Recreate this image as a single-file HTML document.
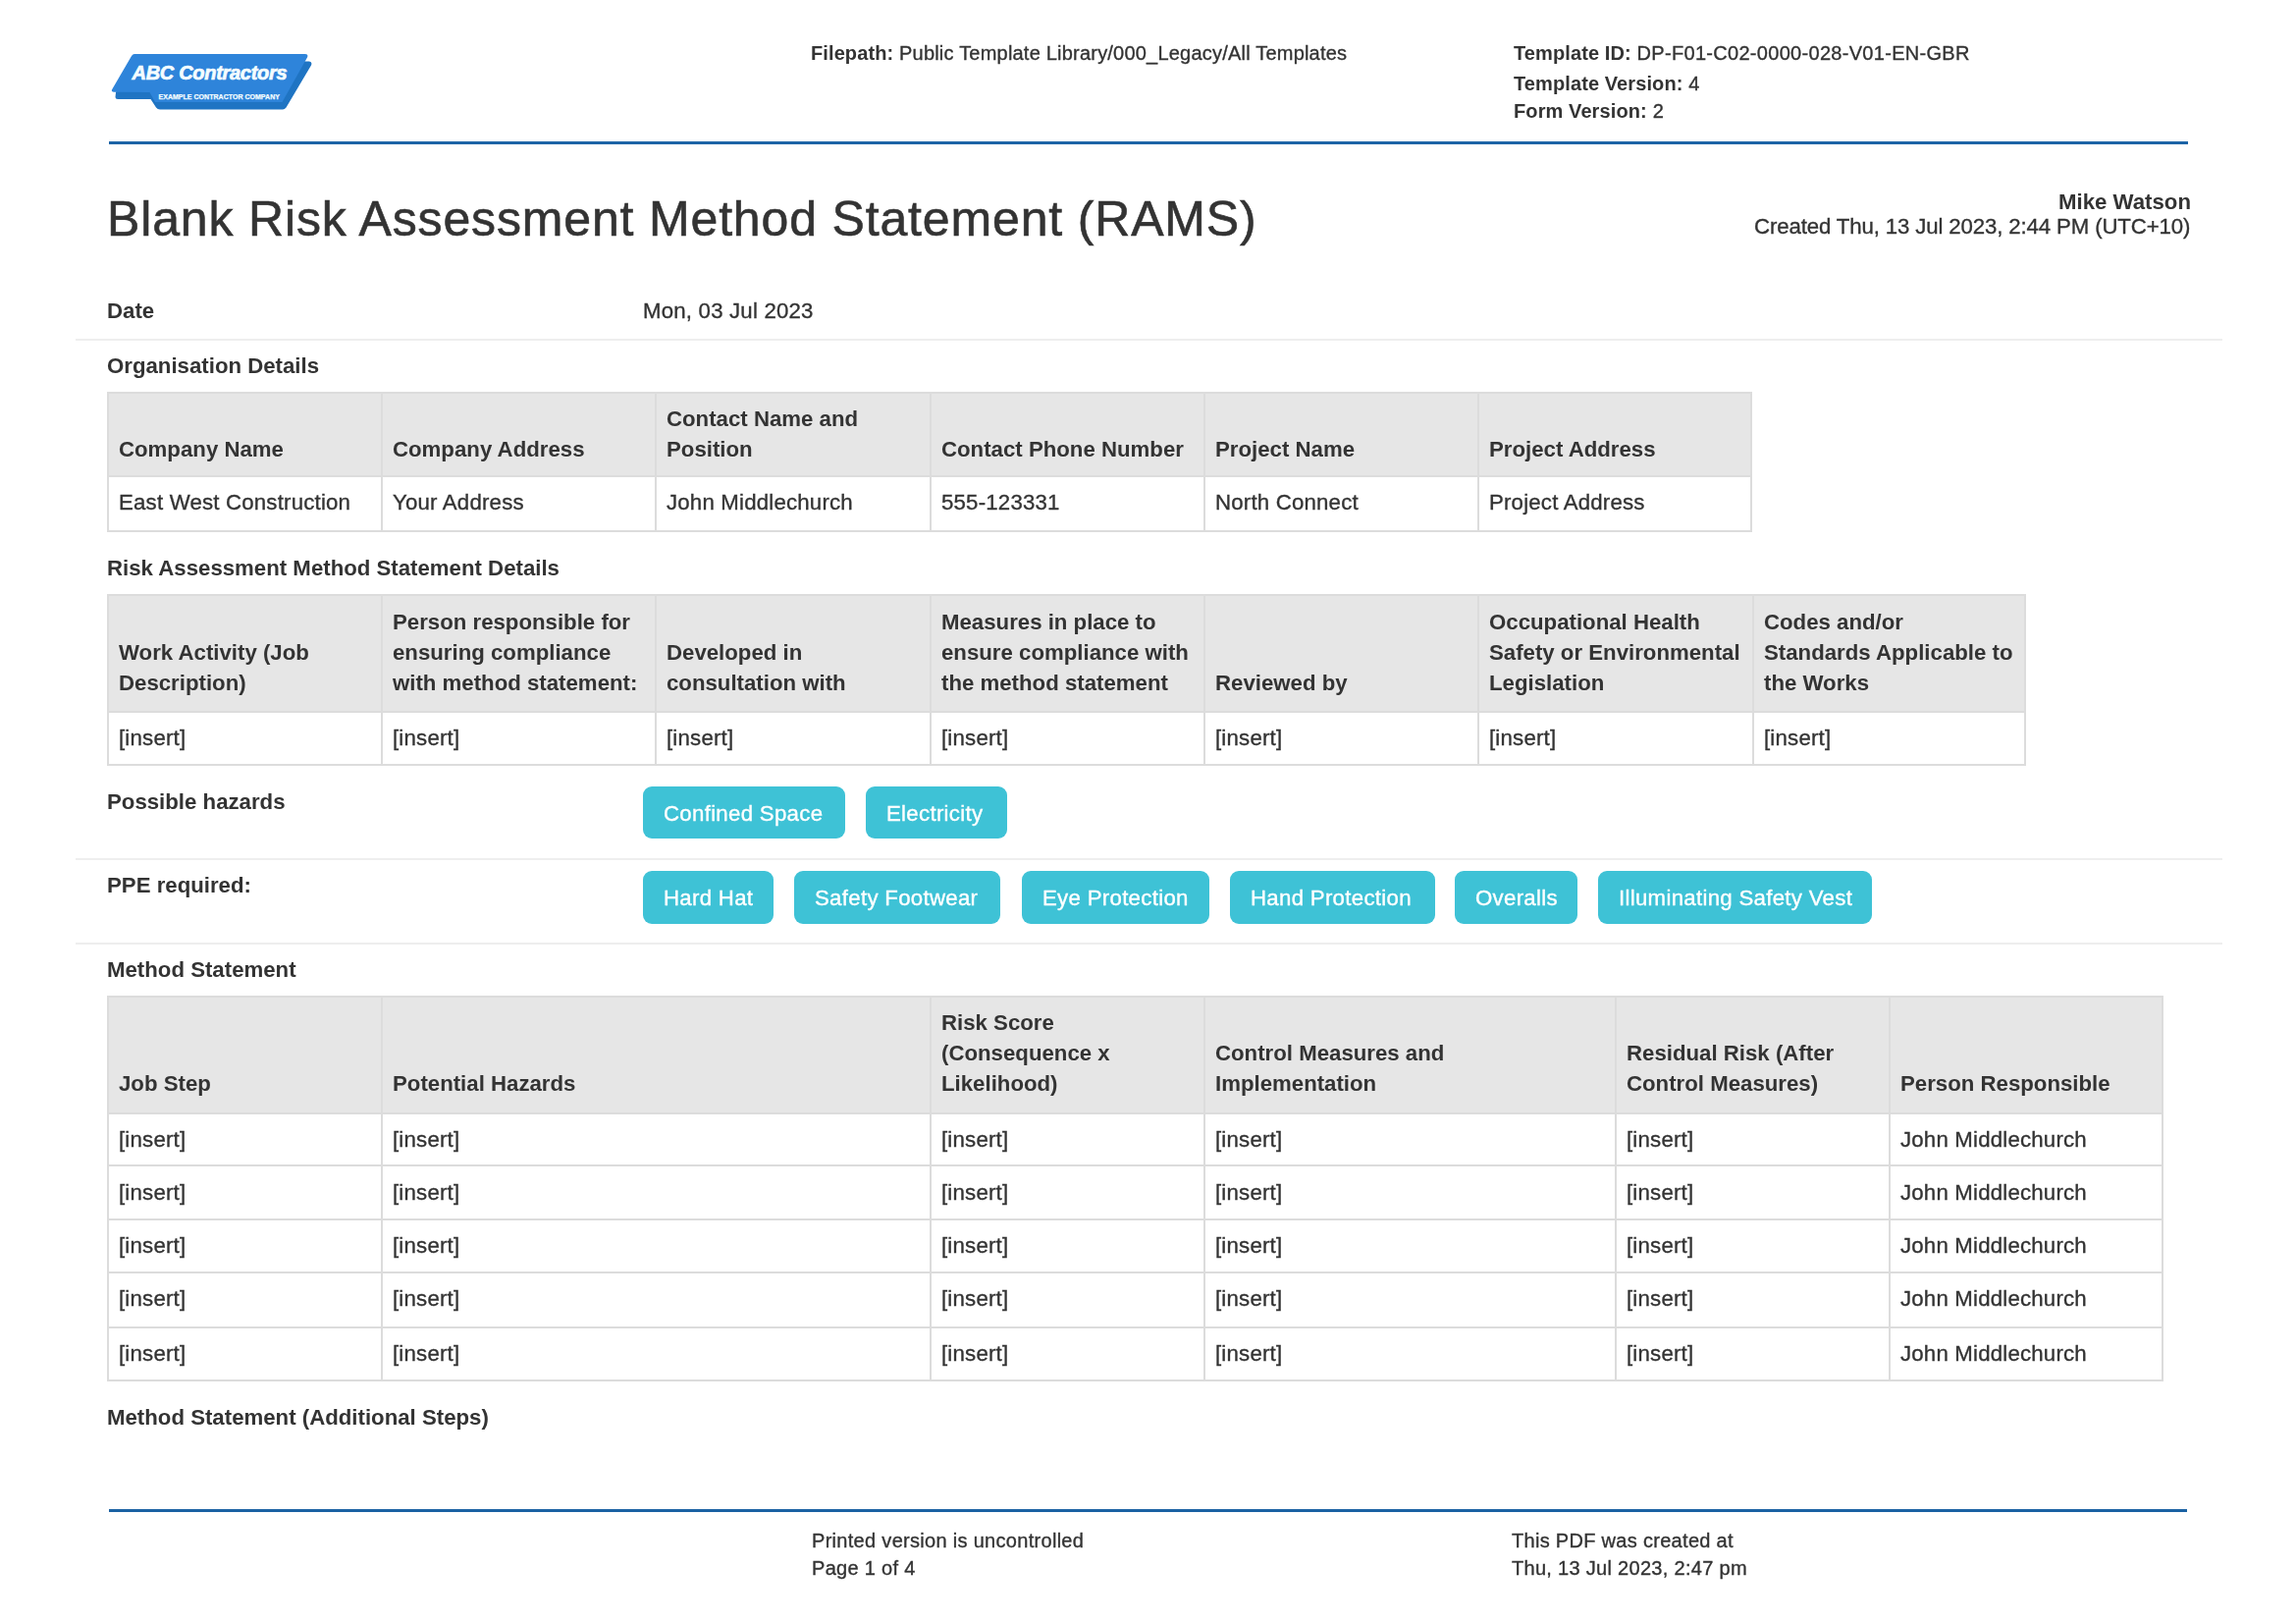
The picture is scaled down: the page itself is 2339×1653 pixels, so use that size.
<!DOCTYPE html>
<html><head><meta charset="utf-8"><title>RAMS</title>
<style>
html,body{margin:0;padding:0;background:#ffffff;}
body{width:2339px;height:1653px;position:relative;overflow:hidden;font-family:'Liberation Sans', sans-serif;color:#333333;}
.t{position:absolute;white-space:nowrap;will-change:transform;font-family:'Liberation Sans', sans-serif;}
.t b{font-weight:bold;-webkit-text-stroke-width:0;}
.t{-webkit-text-stroke:0.35px currentColor;}
.t.bo{-webkit-text-stroke-width:0;}
.r{position:absolute;}
.pill{position:absolute;background:#3ec2d6;border-radius:9px;color:#ffffff;font-family:'Liberation Sans', sans-serif;font-size:22.22px;line-height:22.22px;white-space:nowrap;box-sizing:border-box;padding-left:21px;padding-top:17.4px;letter-spacing:0.3px;-webkit-text-stroke:0.35px #fff;will-change:transform;}
</style></head><body>
<svg class="logo" width="240" height="80" viewBox="100 45 240 80" style="position:absolute;left:100px;top:45px">
<path d="M118,94 L117.5,99 Q117.5,101 120,101 L153.5,101 L159,109.5 Q160.5,111.6 163,111.6 L288,111.6 Q290,111.6 291.5,109.5 L317,66.5 Q318.5,63 315,62.5 L140,62.5 Z" fill="#1f74c3"/>
<path d="M137,55 L311,55 Q314.5,55 313,58.5 L287.5,104 L158,104 L152.5,94 L116,93.8 Q112.5,93.6 114.5,90.5 L134,57 Q135.2,55 137,55 Z" fill="#2e84da"/>
<text x="134.5" y="81" font-family="Liberation Sans" font-weight="bold" font-style="italic" font-size="20" fill="#f4fdff" letter-spacing="-0.3" stroke="#f4fdff" stroke-width="0.7">ABC Contractors</text>
<text x="161.5" y="101.2" font-family="Liberation Sans" font-weight="bold" font-size="7" fill="#f4fdff" letter-spacing="0.03" stroke="#f4fdff" stroke-width="0.25">EXAMPLE CONTRACTOR COMPANY</text>
</svg>
<div class="t" style="left:826.4px;top:44.00px;font-size:20.0px;line-height:20.0px;font-weight:normal;font-style:normal;color:#333333;letter-spacing:0.21px;"><b style="letter-spacing:0.1px">Filepath:</b> Public Template Library/000_Legacy/All Templates</div>
<div class="t" style="left:1541.5px;top:44.00px;font-size:20.0px;line-height:20.0px;font-weight:normal;font-style:normal;color:#333333;letter-spacing:0.3px;"><b style="letter-spacing:0.1px">Template ID:</b> DP-F01-C02-0000-028-V01-EN-GBR</div>
<div class="t" style="left:1541.5px;top:75.00px;font-size:20.0px;line-height:20.0px;font-weight:normal;font-style:normal;color:#333333;letter-spacing:0.3px;"><b style="letter-spacing:0.1px">Template Version:</b> 4</div>
<div class="t" style="left:1541.5px;top:103.00px;font-size:20.0px;line-height:20.0px;font-weight:normal;font-style:normal;color:#333333;letter-spacing:0.3px;"><b style="letter-spacing:0.1px">Form Version:</b> 2</div>
<div class="r" style="left:111px;top:144px;width:2118px;height:3.2px;background:#1d64a6;"></div>
<div class="t" style="left:109px;top:198.00px;font-size:50px;line-height:50px;font-weight:normal;font-style:normal;color:#333333;letter-spacing:0.84px;-webkit-text-stroke:0.6px #333;">Blank Risk Assessment Method Statement (RAMS)</div>
<div class="t bo" style="right:107.30000000000018px;top:195.00px;font-size:22.22px;line-height:22.22px;font-weight:bold;font-style:normal;color:#333333;">Mike Watson</div>
<div class="t" style="right:107.59999999999991px;top:220.00px;font-size:22.22px;line-height:22.22px;font-weight:normal;font-style:normal;color:#333333;letter-spacing:-0.13px;">Created Thu, 13 Jul 2023, 2:44 PM (UTC+10)</div>
<div class="t bo" style="left:108.7px;top:306.00px;font-size:22.22px;line-height:22.22px;font-weight:bold;font-style:normal;color:#333333;">Date</div>
<div class="t" style="left:654.7px;top:306.00px;font-size:22.22px;line-height:22.22px;font-weight:normal;font-style:normal;color:#333333;letter-spacing:0.2px;">Mon, 03 Jul 2023</div>
<div class="r" style="left:77px;top:344.5px;width:2187px;height:2px;background:#eeeeee;"></div>
<div class="t bo" style="left:108.7px;top:362.00px;font-size:22.22px;line-height:22.22px;font-weight:bold;font-style:normal;color:#333333;">Organisation Details</div>
<div class="r" style="left:109px;top:398.7px;width:1675.7px;height:86.30000000000001px;background:#e6e6e6;"></div>
<div class="r" style="left:109px;top:398.7px;width:1675.7px;height:2px;background:#dcdcdc;"></div>
<div class="r" style="left:109px;top:484.0px;width:1675.7px;height:2px;background:#dcdcdc;"></div>
<div class="r" style="left:109px;top:540.0px;width:1675.7px;height:2px;background:#dcdcdc;"></div>
<div class="r" style="left:109px;top:398.7px;width:2px;height:143.3px;background:#dcdcdc;"></div>
<div class="r" style="left:388.2px;top:398.7px;width:2px;height:143.3px;background:#dcdcdc;"></div>
<div class="r" style="left:667.4px;top:398.7px;width:2px;height:143.3px;background:#dcdcdc;"></div>
<div class="r" style="left:946.8px;top:398.7px;width:2px;height:143.3px;background:#dcdcdc;"></div>
<div class="r" style="left:1226.1px;top:398.7px;width:2px;height:143.3px;background:#dcdcdc;"></div>
<div class="r" style="left:1505.3px;top:398.7px;width:2px;height:143.3px;background:#dcdcdc;"></div>
<div class="r" style="left:1782.7px;top:398.7px;width:2px;height:143.3px;background:#dcdcdc;"></div>
<div class="t bo" style="left:121px;top:447.00px;font-size:22.22px;line-height:22.22px;font-weight:bold;font-style:normal;color:#333333;">Company Name</div>
<div class="t bo" style="left:400.2px;top:447.00px;font-size:22.22px;line-height:22.22px;font-weight:bold;font-style:normal;color:#333333;">Company Address</div>
<div class="t bo" style="left:679.4px;top:416.00px;font-size:22.22px;line-height:22.22px;font-weight:bold;font-style:normal;color:#333333;">Contact Name and</div>
<div class="t bo" style="left:679.4px;top:447.00px;font-size:22.22px;line-height:22.22px;font-weight:bold;font-style:normal;color:#333333;">Position</div>
<div class="t bo" style="left:958.8px;top:447.00px;font-size:22.22px;line-height:22.22px;font-weight:bold;font-style:normal;color:#333333;">Contact Phone Number</div>
<div class="t bo" style="left:1238.1px;top:447.00px;font-size:22.22px;line-height:22.22px;font-weight:bold;font-style:normal;color:#333333;">Project Name</div>
<div class="t bo" style="left:1517.3px;top:447.00px;font-size:22.22px;line-height:22.22px;font-weight:bold;font-style:normal;color:#333333;">Project Address</div>
<div class="t" style="left:121px;top:501.00px;font-size:22.22px;line-height:22.22px;font-weight:normal;font-style:normal;color:#333333;letter-spacing:0.2px;">East West Construction</div>
<div class="t" style="left:400.2px;top:501.00px;font-size:22.22px;line-height:22.22px;font-weight:normal;font-style:normal;color:#333333;letter-spacing:0.2px;">Your Address</div>
<div class="t" style="left:679.4px;top:501.00px;font-size:22.22px;line-height:22.22px;font-weight:normal;font-style:normal;color:#333333;letter-spacing:0.2px;">John Middlechurch</div>
<div class="t" style="left:958.8px;top:501.00px;font-size:22.22px;line-height:22.22px;font-weight:normal;font-style:normal;color:#333333;letter-spacing:0.2px;">555-123331</div>
<div class="t" style="left:1238.1px;top:501.00px;font-size:22.22px;line-height:22.22px;font-weight:normal;font-style:normal;color:#333333;letter-spacing:0.2px;">North Connect</div>
<div class="t" style="left:1517.3px;top:501.00px;font-size:22.22px;line-height:22.22px;font-weight:normal;font-style:normal;color:#333333;letter-spacing:0.2px;">Project Address</div>
<div class="t bo" style="left:108.7px;top:568.00px;font-size:22.22px;line-height:22.22px;font-weight:bold;font-style:normal;color:#333333;">Risk Assessment Method Statement Details</div>
<div class="r" style="left:109px;top:605.1px;width:1954.8000000000002px;height:120.10000000000002px;background:#e6e6e6;"></div>
<div class="r" style="left:109px;top:605.1px;width:1954.8000000000002px;height:2px;background:#dcdcdc;"></div>
<div class="r" style="left:109px;top:724.2px;width:1954.8000000000002px;height:2px;background:#dcdcdc;"></div>
<div class="r" style="left:109px;top:777.8px;width:1954.8000000000002px;height:2px;background:#dcdcdc;"></div>
<div class="r" style="left:109px;top:605.1px;width:2px;height:174.69999999999993px;background:#dcdcdc;"></div>
<div class="r" style="left:388.2px;top:605.1px;width:2px;height:174.69999999999993px;background:#dcdcdc;"></div>
<div class="r" style="left:667.4px;top:605.1px;width:2px;height:174.69999999999993px;background:#dcdcdc;"></div>
<div class="r" style="left:946.8px;top:605.1px;width:2px;height:174.69999999999993px;background:#dcdcdc;"></div>
<div class="r" style="left:1226.1px;top:605.1px;width:2px;height:174.69999999999993px;background:#dcdcdc;"></div>
<div class="r" style="left:1505.3px;top:605.1px;width:2px;height:174.69999999999993px;background:#dcdcdc;"></div>
<div class="r" style="left:1784.6px;top:605.1px;width:2px;height:174.69999999999993px;background:#dcdcdc;"></div>
<div class="r" style="left:2061.8px;top:605.1px;width:2px;height:174.69999999999993px;background:#dcdcdc;"></div>
<div class="t bo" style="left:121px;top:654.00px;font-size:22.22px;line-height:22.22px;font-weight:bold;font-style:normal;color:#333333;">Work Activity (Job</div>
<div class="t bo" style="left:121px;top:685.00px;font-size:22.22px;line-height:22.22px;font-weight:bold;font-style:normal;color:#333333;">Description)</div>
<div class="t bo" style="left:400.2px;top:623.00px;font-size:22.22px;line-height:22.22px;font-weight:bold;font-style:normal;color:#333333;">Person responsible for</div>
<div class="t bo" style="left:400.2px;top:654.00px;font-size:22.22px;line-height:22.22px;font-weight:bold;font-style:normal;color:#333333;">ensuring compliance</div>
<div class="t bo" style="left:400.2px;top:685.00px;font-size:22.22px;line-height:22.22px;font-weight:bold;font-style:normal;color:#333333;">with method statement:</div>
<div class="t bo" style="left:679.4px;top:654.00px;font-size:22.22px;line-height:22.22px;font-weight:bold;font-style:normal;color:#333333;">Developed in</div>
<div class="t bo" style="left:679.4px;top:685.00px;font-size:22.22px;line-height:22.22px;font-weight:bold;font-style:normal;color:#333333;">consultation with</div>
<div class="t bo" style="left:958.8px;top:623.00px;font-size:22.22px;line-height:22.22px;font-weight:bold;font-style:normal;color:#333333;">Measures in place to</div>
<div class="t bo" style="left:958.8px;top:654.00px;font-size:22.22px;line-height:22.22px;font-weight:bold;font-style:normal;color:#333333;">ensure compliance with</div>
<div class="t bo" style="left:958.8px;top:685.00px;font-size:22.22px;line-height:22.22px;font-weight:bold;font-style:normal;color:#333333;">the method statement</div>
<div class="t bo" style="left:1238.1px;top:685.00px;font-size:22.22px;line-height:22.22px;font-weight:bold;font-style:normal;color:#333333;">Reviewed by</div>
<div class="t bo" style="left:1517.3px;top:623.00px;font-size:22.22px;line-height:22.22px;font-weight:bold;font-style:normal;color:#333333;">Occupational Health</div>
<div class="t bo" style="left:1517.3px;top:654.00px;font-size:22.22px;line-height:22.22px;font-weight:bold;font-style:normal;color:#333333;">Safety or Environmental</div>
<div class="t bo" style="left:1517.3px;top:685.00px;font-size:22.22px;line-height:22.22px;font-weight:bold;font-style:normal;color:#333333;">Legislation</div>
<div class="t bo" style="left:1796.6px;top:623.00px;font-size:22.22px;line-height:22.22px;font-weight:bold;font-style:normal;color:#333333;">Codes and/or</div>
<div class="t bo" style="left:1796.6px;top:654.00px;font-size:22.22px;line-height:22.22px;font-weight:bold;font-style:normal;color:#333333;">Standards Applicable to</div>
<div class="t bo" style="left:1796.6px;top:685.00px;font-size:22.22px;line-height:22.22px;font-weight:bold;font-style:normal;color:#333333;">the Works</div>
<div class="t" style="left:121px;top:741.00px;font-size:22.22px;line-height:22.22px;font-weight:normal;font-style:normal;color:#333333;letter-spacing:0.2px;">[insert]</div>
<div class="t" style="left:400.2px;top:741.00px;font-size:22.22px;line-height:22.22px;font-weight:normal;font-style:normal;color:#333333;letter-spacing:0.2px;">[insert]</div>
<div class="t" style="left:679.4px;top:741.00px;font-size:22.22px;line-height:22.22px;font-weight:normal;font-style:normal;color:#333333;letter-spacing:0.2px;">[insert]</div>
<div class="t" style="left:958.8px;top:741.00px;font-size:22.22px;line-height:22.22px;font-weight:normal;font-style:normal;color:#333333;letter-spacing:0.2px;">[insert]</div>
<div class="t" style="left:1238.1px;top:741.00px;font-size:22.22px;line-height:22.22px;font-weight:normal;font-style:normal;color:#333333;letter-spacing:0.2px;">[insert]</div>
<div class="t" style="left:1517.3px;top:741.00px;font-size:22.22px;line-height:22.22px;font-weight:normal;font-style:normal;color:#333333;letter-spacing:0.2px;">[insert]</div>
<div class="t" style="left:1796.6px;top:741.00px;font-size:22.22px;line-height:22.22px;font-weight:normal;font-style:normal;color:#333333;letter-spacing:0.2px;">[insert]</div>
<div class="t bo" style="left:108.7px;top:806.00px;font-size:22.22px;line-height:22.22px;font-weight:bold;font-style:normal;color:#333333;">Possible hazards</div>
<div class="pill" style="left:655.2px;top:801.3px;width:205.6px;height:53.3px;">Confined Space</div>
<div class="pill" style="left:882.2px;top:801.3px;width:143.6px;height:53.3px;">Electricity</div>
<div class="r" style="left:77px;top:873.7px;width:2187px;height:2px;background:#eeeeee;"></div>
<div class="t bo" style="left:108.7px;top:891.00px;font-size:22.22px;line-height:22.22px;font-weight:bold;font-style:normal;color:#333333;">PPE required:</div>
<div class="pill" style="left:655.2px;top:886.5px;width:132.8px;height:53.5px;">Hard Hat</div>
<div class="pill" style="left:809.4px;top:886.5px;width:210.0px;height:53.5px;">Safety Footwear</div>
<div class="pill" style="left:1040.7px;top:886.5px;width:191.2px;height:53.5px;">Eye Protection</div>
<div class="pill" style="left:1253px;top:886.5px;width:208.7px;height:53.5px;">Hand Protection</div>
<div class="pill" style="left:1482.4px;top:886.5px;width:124.8px;height:53.5px;">Overalls</div>
<div class="pill" style="left:1628.3px;top:886.5px;width:278.9px;height:53.5px;">Illuminating Safety Vest</div>
<div class="r" style="left:77px;top:959.5px;width:2187px;height:2px;background:#eeeeee;"></div>
<div class="t bo" style="left:108.7px;top:977.00px;font-size:22.22px;line-height:22.22px;font-weight:bold;font-style:normal;color:#333333;">Method Statement</div>
<div class="r" style="left:109px;top:1013.5px;width:2094.5px;height:120.09999999999991px;background:#e6e6e6;"></div>
<div class="r" style="left:109px;top:1013.5px;width:2094.5px;height:2px;background:#dcdcdc;"></div>
<div class="r" style="left:109px;top:1132.6px;width:2094.5px;height:2px;background:#dcdcdc;"></div>
<div class="r" style="left:109px;top:1186.2px;width:2094.5px;height:2px;background:#dcdcdc;"></div>
<div class="r" style="left:109px;top:1240.6px;width:2094.5px;height:2px;background:#dcdcdc;"></div>
<div class="r" style="left:109px;top:1295.0px;width:2094.5px;height:2px;background:#dcdcdc;"></div>
<div class="r" style="left:109px;top:1351.0px;width:2094.5px;height:2px;background:#dcdcdc;"></div>
<div class="r" style="left:109px;top:1405.0px;width:2094.5px;height:2px;background:#dcdcdc;"></div>
<div class="r" style="left:109px;top:1013.5px;width:2px;height:393.5px;background:#dcdcdc;"></div>
<div class="r" style="left:388.2px;top:1013.5px;width:2px;height:393.5px;background:#dcdcdc;"></div>
<div class="r" style="left:946.8px;top:1013.5px;width:2px;height:393.5px;background:#dcdcdc;"></div>
<div class="r" style="left:1226.1px;top:1013.5px;width:2px;height:393.5px;background:#dcdcdc;"></div>
<div class="r" style="left:1645.2px;top:1013.5px;width:2px;height:393.5px;background:#dcdcdc;"></div>
<div class="r" style="left:1924.2px;top:1013.5px;width:2px;height:393.5px;background:#dcdcdc;"></div>
<div class="r" style="left:2201.5px;top:1013.5px;width:2px;height:393.5px;background:#dcdcdc;"></div>
<div class="t bo" style="left:121px;top:1093.00px;font-size:22.22px;line-height:22.22px;font-weight:bold;font-style:normal;color:#333333;">Job Step</div>
<div class="t bo" style="left:400.2px;top:1093.00px;font-size:22.22px;line-height:22.22px;font-weight:bold;font-style:normal;color:#333333;">Potential Hazards</div>
<div class="t bo" style="left:958.8px;top:1031.00px;font-size:22.22px;line-height:22.22px;font-weight:bold;font-style:normal;color:#333333;">Risk Score</div>
<div class="t bo" style="left:958.8px;top:1062.00px;font-size:22.22px;line-height:22.22px;font-weight:bold;font-style:normal;color:#333333;">(Consequence x</div>
<div class="t bo" style="left:958.8px;top:1093.00px;font-size:22.22px;line-height:22.22px;font-weight:bold;font-style:normal;color:#333333;">Likelihood)</div>
<div class="t bo" style="left:1238.1px;top:1062.00px;font-size:22.22px;line-height:22.22px;font-weight:bold;font-style:normal;color:#333333;">Control Measures and</div>
<div class="t bo" style="left:1238.1px;top:1093.00px;font-size:22.22px;line-height:22.22px;font-weight:bold;font-style:normal;color:#333333;">Implementation</div>
<div class="t bo" style="left:1657.2px;top:1062.00px;font-size:22.22px;line-height:22.22px;font-weight:bold;font-style:normal;color:#333333;">Residual Risk (After</div>
<div class="t bo" style="left:1657.2px;top:1093.00px;font-size:22.22px;line-height:22.22px;font-weight:bold;font-style:normal;color:#333333;">Control Measures)</div>
<div class="t bo" style="left:1936.2px;top:1093.00px;font-size:22.22px;line-height:22.22px;font-weight:bold;font-style:normal;color:#333333;">Person Responsible</div>
<div class="t" style="left:121px;top:1150.00px;font-size:22.22px;line-height:22.22px;font-weight:normal;font-style:normal;color:#333333;letter-spacing:0.2px;">[insert]</div>
<div class="t" style="left:400.2px;top:1150.00px;font-size:22.22px;line-height:22.22px;font-weight:normal;font-style:normal;color:#333333;letter-spacing:0.2px;">[insert]</div>
<div class="t" style="left:958.8px;top:1150.00px;font-size:22.22px;line-height:22.22px;font-weight:normal;font-style:normal;color:#333333;letter-spacing:0.2px;">[insert]</div>
<div class="t" style="left:1238.1px;top:1150.00px;font-size:22.22px;line-height:22.22px;font-weight:normal;font-style:normal;color:#333333;letter-spacing:0.2px;">[insert]</div>
<div class="t" style="left:1657.2px;top:1150.00px;font-size:22.22px;line-height:22.22px;font-weight:normal;font-style:normal;color:#333333;letter-spacing:0.2px;">[insert]</div>
<div class="t" style="left:1936.2px;top:1150.00px;font-size:22.22px;line-height:22.22px;font-weight:normal;font-style:normal;color:#333333;letter-spacing:0.2px;">John Middlechurch</div>
<div class="t" style="left:121px;top:1204.00px;font-size:22.22px;line-height:22.22px;font-weight:normal;font-style:normal;color:#333333;letter-spacing:0.2px;">[insert]</div>
<div class="t" style="left:400.2px;top:1204.00px;font-size:22.22px;line-height:22.22px;font-weight:normal;font-style:normal;color:#333333;letter-spacing:0.2px;">[insert]</div>
<div class="t" style="left:958.8px;top:1204.00px;font-size:22.22px;line-height:22.22px;font-weight:normal;font-style:normal;color:#333333;letter-spacing:0.2px;">[insert]</div>
<div class="t" style="left:1238.1px;top:1204.00px;font-size:22.22px;line-height:22.22px;font-weight:normal;font-style:normal;color:#333333;letter-spacing:0.2px;">[insert]</div>
<div class="t" style="left:1657.2px;top:1204.00px;font-size:22.22px;line-height:22.22px;font-weight:normal;font-style:normal;color:#333333;letter-spacing:0.2px;">[insert]</div>
<div class="t" style="left:1936.2px;top:1204.00px;font-size:22.22px;line-height:22.22px;font-weight:normal;font-style:normal;color:#333333;letter-spacing:0.2px;">John Middlechurch</div>
<div class="t" style="left:121px;top:1258.00px;font-size:22.22px;line-height:22.22px;font-weight:normal;font-style:normal;color:#333333;letter-spacing:0.2px;">[insert]</div>
<div class="t" style="left:400.2px;top:1258.00px;font-size:22.22px;line-height:22.22px;font-weight:normal;font-style:normal;color:#333333;letter-spacing:0.2px;">[insert]</div>
<div class="t" style="left:958.8px;top:1258.00px;font-size:22.22px;line-height:22.22px;font-weight:normal;font-style:normal;color:#333333;letter-spacing:0.2px;">[insert]</div>
<div class="t" style="left:1238.1px;top:1258.00px;font-size:22.22px;line-height:22.22px;font-weight:normal;font-style:normal;color:#333333;letter-spacing:0.2px;">[insert]</div>
<div class="t" style="left:1657.2px;top:1258.00px;font-size:22.22px;line-height:22.22px;font-weight:normal;font-style:normal;color:#333333;letter-spacing:0.2px;">[insert]</div>
<div class="t" style="left:1936.2px;top:1258.00px;font-size:22.22px;line-height:22.22px;font-weight:normal;font-style:normal;color:#333333;letter-spacing:0.2px;">John Middlechurch</div>
<div class="t" style="left:121px;top:1312.00px;font-size:22.22px;line-height:22.22px;font-weight:normal;font-style:normal;color:#333333;letter-spacing:0.2px;">[insert]</div>
<div class="t" style="left:400.2px;top:1312.00px;font-size:22.22px;line-height:22.22px;font-weight:normal;font-style:normal;color:#333333;letter-spacing:0.2px;">[insert]</div>
<div class="t" style="left:958.8px;top:1312.00px;font-size:22.22px;line-height:22.22px;font-weight:normal;font-style:normal;color:#333333;letter-spacing:0.2px;">[insert]</div>
<div class="t" style="left:1238.1px;top:1312.00px;font-size:22.22px;line-height:22.22px;font-weight:normal;font-style:normal;color:#333333;letter-spacing:0.2px;">[insert]</div>
<div class="t" style="left:1657.2px;top:1312.00px;font-size:22.22px;line-height:22.22px;font-weight:normal;font-style:normal;color:#333333;letter-spacing:0.2px;">[insert]</div>
<div class="t" style="left:1936.2px;top:1312.00px;font-size:22.22px;line-height:22.22px;font-weight:normal;font-style:normal;color:#333333;letter-spacing:0.2px;">John Middlechurch</div>
<div class="t" style="left:121px;top:1368.00px;font-size:22.22px;line-height:22.22px;font-weight:normal;font-style:normal;color:#333333;letter-spacing:0.2px;">[insert]</div>
<div class="t" style="left:400.2px;top:1368.00px;font-size:22.22px;line-height:22.22px;font-weight:normal;font-style:normal;color:#333333;letter-spacing:0.2px;">[insert]</div>
<div class="t" style="left:958.8px;top:1368.00px;font-size:22.22px;line-height:22.22px;font-weight:normal;font-style:normal;color:#333333;letter-spacing:0.2px;">[insert]</div>
<div class="t" style="left:1238.1px;top:1368.00px;font-size:22.22px;line-height:22.22px;font-weight:normal;font-style:normal;color:#333333;letter-spacing:0.2px;">[insert]</div>
<div class="t" style="left:1657.2px;top:1368.00px;font-size:22.22px;line-height:22.22px;font-weight:normal;font-style:normal;color:#333333;letter-spacing:0.2px;">[insert]</div>
<div class="t" style="left:1936.2px;top:1368.00px;font-size:22.22px;line-height:22.22px;font-weight:normal;font-style:normal;color:#333333;letter-spacing:0.2px;">John Middlechurch</div>
<div class="t bo" style="left:108.7px;top:1433.00px;font-size:22.22px;line-height:22.22px;font-weight:bold;font-style:normal;color:#333333;">Method Statement (Additional Steps)</div>
<div class="r" style="left:111px;top:1537.0px;width:2117px;height:3px;background:#1b62a3;"></div>
<div class="t" style="left:826.5px;top:1559.00px;font-size:20.0px;line-height:20.0px;font-weight:normal;font-style:normal;color:#333333;letter-spacing:0.3px;">Printed version is uncontrolled</div>
<div class="t" style="left:826.5px;top:1587.00px;font-size:20.0px;line-height:20.0px;font-weight:normal;font-style:normal;color:#333333;letter-spacing:0.3px;">Page 1 of 4</div>
<div class="t" style="left:1539.8px;top:1559.00px;font-size:20.0px;line-height:20.0px;font-weight:normal;font-style:normal;color:#333333;letter-spacing:0.3px;">This PDF was created at</div>
<div class="t" style="left:1539.8px;top:1587.00px;font-size:20.0px;line-height:20.0px;font-weight:normal;font-style:normal;color:#333333;letter-spacing:0.3px;">Thu, 13 Jul 2023, 2:47 pm</div>
</body></html>
